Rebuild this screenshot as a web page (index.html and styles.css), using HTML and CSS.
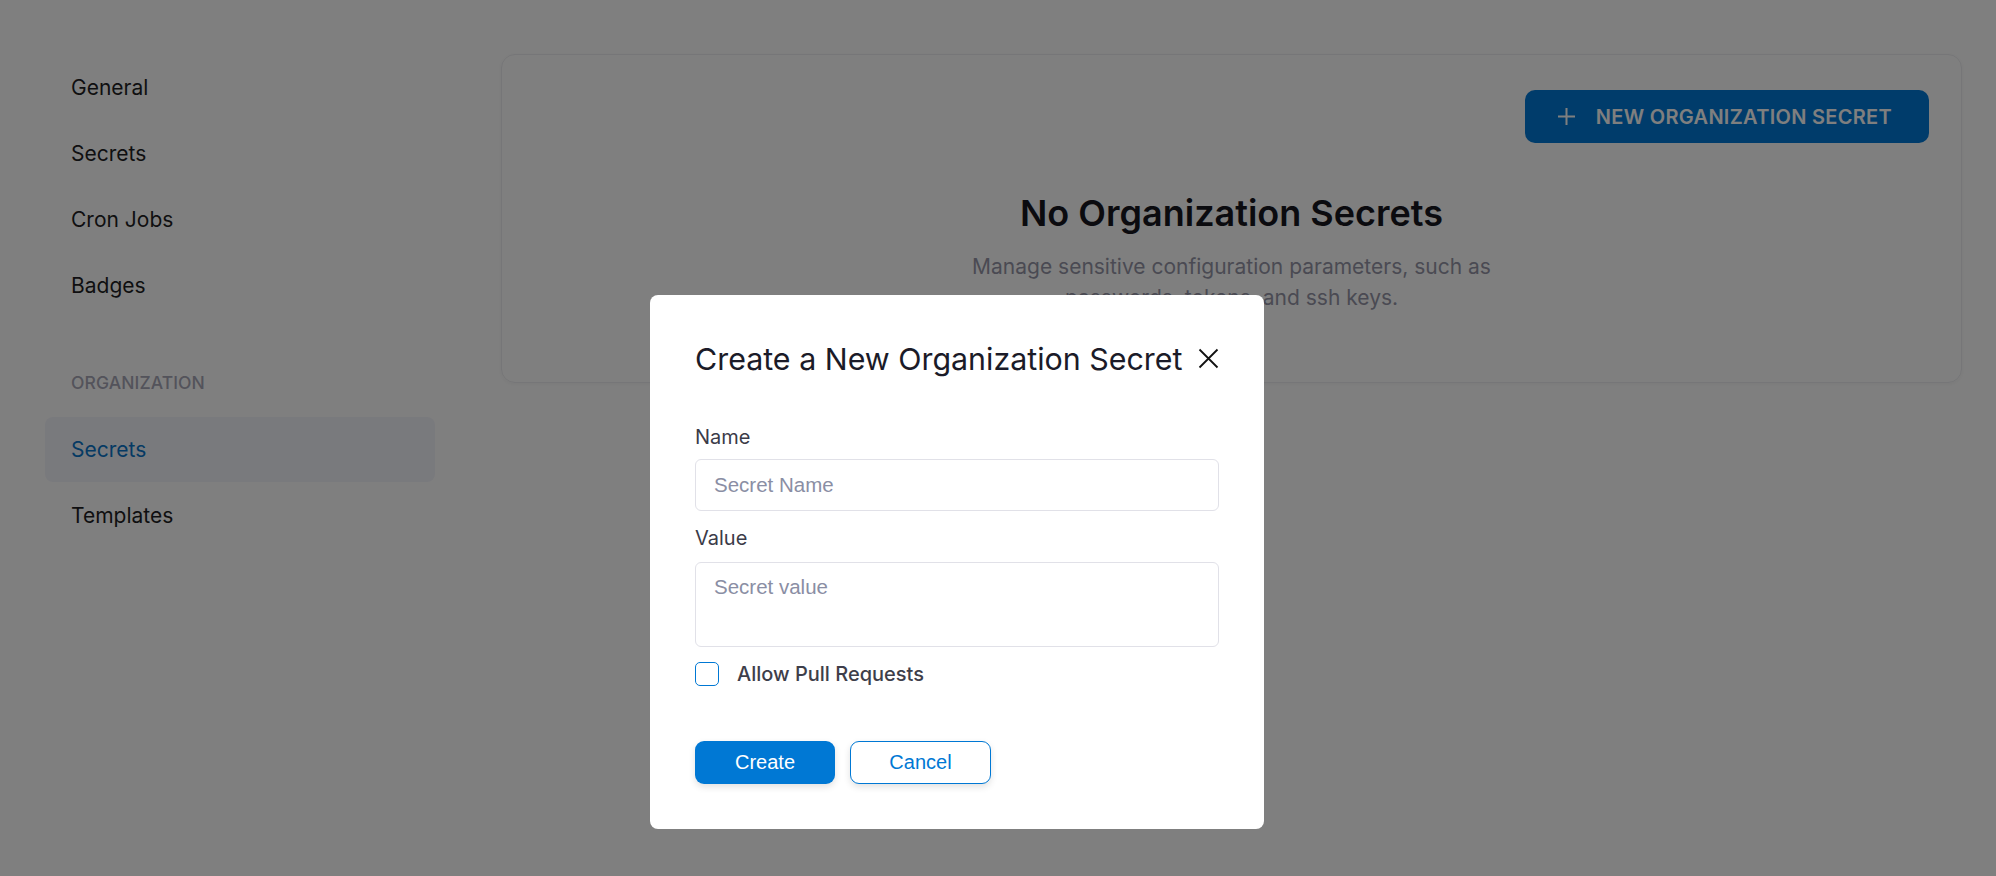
FILE: index.html
```html
<!DOCTYPE html>
<html lang="en">
<head>
<meta charset="utf-8">
<title>Organization Secrets</title>
<link rel="stylesheet" href="styles.css">
</head>
<body>
<div class="page">
  <nav class="sidebar">
    <a class="nav-item">General</a>
    <a class="nav-item">Secrets</a>
    <a class="nav-item">Cron Jobs</a>
    <a class="nav-item">Badges</a>
    <div class="nav-section">ORGANIZATION</div>
    <a class="nav-item active">Secrets</a>
    <a class="nav-item">Templates</a>
  </nav>
  <main class="main">
    <section class="card">
      <div class="card-actions">
        <button class="btn-new">
          <svg class="plus" width="19" height="19" viewBox="0 0 19 19"><path d="M9.5 1v17M1 9.5h17" stroke="#fff" stroke-width="2" fill="none"/></svg>
          <span>NEW ORGANIZATION SECRET</span>
        </button>
      </div>
      <h1 class="empty-title">No Organization Secrets</h1>
      <p class="empty-text">Manage sensitive configuration parameters, such as passwords, tokens, and ssh keys.</p>
    </section>
  </main>
</div>
<div class="overlay"></div>
<div class="modal">
  <div class="modal-head">
    <h2 class="modal-title">Create a New Organization Secret</h2>
    <svg class="close" width="21" height="21" viewBox="0 0 21 21"><path d="M1.5 1.5l18 18M19.5 1.5l-18 18" stroke="#111" stroke-width="1.8" fill="none"/></svg>
  </div>
  <label class="field-label label-name">Name</label>
  <input class="field-input" type="text" placeholder="Secret Name">
  <label class="field-label label-value">Value</label>
  <textarea class="field-area" placeholder="Secret value"></textarea>
  <label class="check-row">
    <span class="checkbox"></span>
    <span class="check-text">Allow Pull Requests</span>
  </label>
  <div class="modal-actions">
    <button class="btn-create">Create</button>
    <button class="btn-cancel">Cancel</button>
  </div>
</div>
</body>
</html>
```
FILE: styles.css
```css
* { box-sizing: border-box; }
html, body { margin: 0; padding: 0; }
body {
  width: 1996px;
  height: 876px;
  overflow: hidden;
  background: #ffffff;
  font-family: "Inter", "Liberation Sans", sans-serif;
  color: #1e1e1e;
}
.page {
  display: flex;
  align-items: flex-start;
  padding: 0 34px 0 45px;
}
.sidebar {
  width: 390px;
  flex: none;
  display: flex;
  flex-direction: column;
  padding-top: 54px;
}
.nav-item {
  display: flex;
  align-items: center;
  height: 66px;
  padding-left: 26px;
  font-size: 21px;
  color: #1f1f24;
  border-radius: 8px;
}
.nav-item.active {
  background: #f3f4fb;
  color: #0a74c8;
  height: 65px;
}
.nav-section {
  margin: 54px 0 23px;
  padding-left: 26px;
  font-size: 17.5px;
  line-height: 22px;
  font-weight: 500;
  color: #a7a7b6;
  letter-spacing: 0.1px;
}
.main {
  flex: 1;
  padding-left: 66px;
  padding-top: 54px;
}
.card {
  border: 1px solid #ececf0;
  border-radius: 14px;
  box-shadow: 0 1px 4px rgba(0,0,0,0.05);
  padding: 35px 32px 69px;
  text-align: center;
}
.card-actions {
  display: flex;
  justify-content: flex-end;
}
.btn-new {
  display: flex;
  align-items: center;
  gap: 20px;
  height: 53px;
  padding: 0 37px 0 32px;
  border: none;
  border-radius: 10px;
  background: #0078d6;
  color: #fff;
  font-family: "Inter", sans-serif;
  font-size: 20px;
  font-weight: 600;
  letter-spacing: 0.3px;
}
.plus { flex: none; }
.empty-title {
  margin: 49px 0 0;
  font-size: 36px;
  line-height: 42px;
  font-weight: 600;
  color: #16161e;
}
.empty-text {
  margin: 17px auto 0;
  max-width: 560px;
  font-size: 21px;
  line-height: 31px;
  color: #9595a6;
}
.overlay {
  position: fixed;
  inset: 0;
  background: rgba(0,0,0,0.5);
}
.modal {
  position: absolute;
  left: 650px;
  top: 295px;
  width: 614px;
  height: 534px;
  background: #fff;
  border-radius: 8px;
  padding: 45px;
  display: flex;
  flex-direction: column;
}
.modal-head {
  display: flex;
  align-items: center;
  justify-content: space-between;
  height: 38px;
}
.modal-title {
  margin: 0;
  font-size: 30.4px;
  line-height: 38px;
  font-weight: 400;
  color: #1b1b28;
}
.close { flex: none; margin-top: -2px; }
.field-label {
  font-size: 20px;
  line-height: 24px;
  color: #3b3b48;
}
.label-name { margin-top: 47px; margin-bottom: 10px; }
.label-value { margin-top: 15px; margin-bottom: 12px; }
.field-input, .field-area {
  width: 100%;
  border: 1px solid #e1e1e8;
  border-radius: 6px;
  font-family: "Liberation Sans", Arial, sans-serif;
  font-size: 20.5px;
  color: #333;
  background: #fff;
  outline: none;
}
.field-input {
  height: 52px;
  padding: 0 18px;
}
.field-area {
  height: 85px;
  padding: 12px 18px;
  line-height: 24px;
  resize: none;
}
.field-input::placeholder, .field-area::placeholder {
  color: #8a8ea4;
}
.check-row {
  display: flex;
  align-items: center;
  gap: 18px;
  margin-top: 15px;
  height: 24px;
}
.checkbox {
  width: 24px;
  height: 24px;
  border: 1.3px solid #0078d4;
  border-radius: 5px;
  flex: none;
}
.check-text {
  font-size: 20px;
  font-weight: 500;
  color: #3e3e4a;
}
.modal-actions {
  display: flex;
  gap: 15px;
  margin-top: 55px;
}
.btn-create, .btn-cancel {
  height: 43px;
  border-radius: 9px;
  font-family: "Liberation Sans", Arial, sans-serif;
  font-size: 20px;
  box-shadow: 0 3px 7px rgba(0,0,0,0.12);
}
.btn-create {
  width: 140px;
  border: none;
  background: #0078d4;
  color: #fff;
}
.btn-cancel {
  width: 141px;
  border: 1px solid #0078d4;
  background: #fff;
  color: #0078d4;
}
```
